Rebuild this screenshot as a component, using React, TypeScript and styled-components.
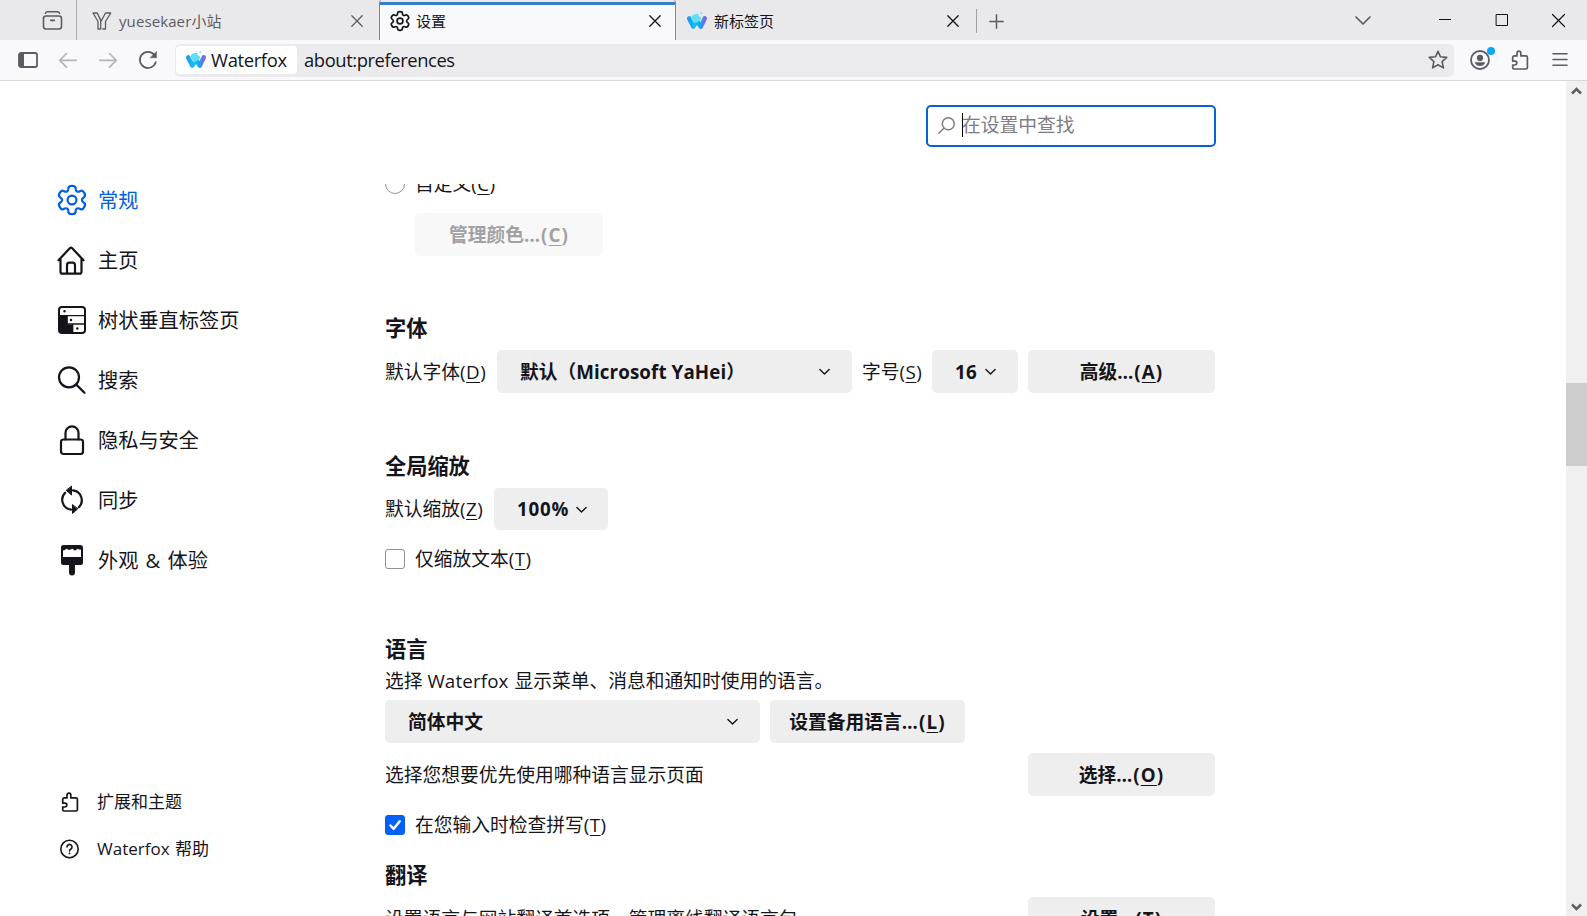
import React from "react";
import styled, { createGlobalStyle } from "styled-components";

const latin = `"Open Sans", "Noto Sans CJK SC", sans-serif`;

const GlobalStyle = createGlobalStyle`
  * { box-sizing: border-box; }
  html, body { margin: 0; height: 100%; overflow: hidden; }
  body { background: #fff; color: #15141a; font-family: ${latin}; }
  button { border: 0; padding: 0; font: inherit; color: inherit; }
  svg { display: block; flex: none; overflow: visible; }
`;

const Window = styled.div`
  width: 1587px;
  height: 916px;
  display: flex;
  flex-direction: column;
  overflow: hidden;
  background: #fff;
`;

/* ---------- tab strip ---------- */
const TabStrip = styled.div`
  height: 40px;
  flex: none;
  display: flex;
  background: #e9e9eb;
  color: #5b5b66;
`;
const TabsOverview = styled.div`
  width: 77px;
  padding-left: 42px;
  display: flex;
  align-items: center;
  border-right: 1px solid #a9a9af;
`;
const Tab = styled.div<{ $w: number; $active?: boolean; $muted?: boolean; $pad: number; $end?: number; $gap: number }>`
  width: ${(p) => p.$w}px;
  padding: 2px ${(p) => p.$end ?? 14}px 0 ${(p) => p.$pad}px;
  display: flex;
  align-items: center;
  gap: ${(p) => p.$gap}px;
  font-size: 15px;
  color: ${(p) => (p.$muted ? "#5c5c62" : "#15141a")};
  ${(p) =>
    p.$active &&
    `background: linear-gradient(#e9e9eb 2px, #3580c4 2px, #3580c4 5px, #f9f9fb 5px);
     border-left: 1px solid #85858f; border-right: 1px solid #85858f;
     border-radius: 3px 3px 0 0;`}
`;
const TabTitle = styled.span<{ $ls?: number }>`
  flex: 1;
  line-height: 20px;
  white-space: nowrap;
  letter-spacing: ${(p) => p.$ls ?? 0}px;
`;
const NewTab = styled.div`
  height: 24px;
  margin-top: 9px;
  padding-left: 12px;
  display: flex;
  align-items: center;
  border-left: 1px solid #a0a0a6;
`;
const WindowControls = styled.div`
  margin-left: auto;
  display: flex;
  align-items: center;
  padding-right: 22px;
  color: #111;
`;
const ControlSlot = styled.div<{ $mr: number }>`
  margin-right: ${(p) => p.$mr}px;
  color: ${(p) => (p.$mr > 60 ? "#5b5b66" : "inherit")};
`;

/* ---------- navigation bar ---------- */
const NavBar = styled.div`
  height: 41px;
  flex: none;
  display: flex;
  align-items: center;
  padding: 0 17px 1px 18px;
  background: #f9f9fb;
  border-bottom: 1px solid #d8d8db;
  color: #5b5b66;
`;
const NavButtons = styled.div`
  display: flex;
  align-items: center;
  gap: 20px;
  width: 157px;
`;
const Faded = styled.span`
  opacity: 0.42;
`;
const UrlBar = styled.div`
  width: 1279px;
  height: 33px;
  margin-top: 1px;
  display: flex;
  align-items: center;
  padding: 0 6px 0 1px;
  border-radius: 5px;
  background: #ebebed;
  font-size: 18.4px;
  color: #15141a;
`;
const Identity = styled.div`
  width: 121px;
  height: 28px;
  padding-left: 10px;
  display: flex;
  align-items: center;
  gap: 5px;
  border-radius: 4px;
  background: #fff;
  line-height: 26px;
`;
const Address = styled.div`
  flex: 1;
  padding-left: 7px;
  line-height: 26px;
`;
const Fit = styled.span<{ $ls: number; $ws?: number }>`
  letter-spacing: ${(p) => p.$ls}px;
  word-spacing: ${(p) => p.$ws ?? 0}px;
`;
const StarSlot = styled.span`
  color: #5b5b66;
`;
const NavTools = styled.div`
  margin-left: auto;
  display: flex;
  gap: 20px;
`;
const Account = styled.span`
  position: relative;
`;
const Dot = styled.i`
  position: absolute;
  right: -5px;
  top: -3px;
  width: 8px;
  height: 8px;
  border-radius: 50%;
  background: #08a9f5;
`;

/* ---------- preferences page ---------- */
const Page = styled.div`
  flex: 1;
  min-height: 0;
  display: flex;
`;
const Sidebar = styled.nav`
  width: 385px;
  padding: 89px 0 44px 57px;
  display: flex;
  flex-direction: column;
  justify-content: space-between;
`;
const Category = styled.div<{ $selected?: boolean }>`
  height: 60px;
  display: flex;
  align-items: center;
  gap: 11px;
  font-size: 20.2px;
  line-height: 30px;
  color: ${(p) => (p.$selected ? "#0061e0" : "#15141a")};
`;
const CategoryName = styled.span`
  word-spacing: 2px;
`;
const FooterLink = styled.div`
  height: 47px;
  display: flex;
  align-items: center;
  gap: 17px;
  padding-left: 3px;
  font-size: 17px;
  line-height: 26px;
`;
const Main = styled.main`
  width: 831px;
  display: flex;
  flex-direction: column;
`;
const SearchRow = styled.div`
  height: 103px;
  flex: none;
  padding-top: 24px;
  display: flex;
  justify-content: flex-end;
`;
const SearchBox = styled.div`
  width: 290px;
  height: 42px;
  padding: 0 0 2px 10px;
  display: flex;
  align-items: center;
  border: 2px solid #0a60d6;
  border-radius: 5px;
  font-size: 18.75px;
  line-height: 26px;
  color: #7d7d84;
`;
const Caret = styled.i`
  width: 1px;
  height: 24px;
  margin: 0 -1px 0 7px;
  background: #000;
`;
const Pane = styled.div`
  flex: 1;
  min-height: 0;
  overflow: hidden;
  font-size: 18.75px;
`;
const Row = styled.div<{ $mt: number; $h?: number; $indent?: number }>`
  width: 830px;
  height: ${(p) => p.$h ?? 43}px;
  margin-top: ${(p) => p.$mt}px;
  padding-left: ${(p) => p.$indent ?? 0}px;
  display: flex;
  align-items: center;
  gap: 10px;
  white-space: nowrap;
  line-height: 26px;
`;
const Heading = styled.h2<{ $mt: number }>`
  height: 30px;
  margin: ${(p) => p.$mt}px 0 0;
  font-size: 21.2px;
  font-weight: 700;
  line-height: 29px;
`;
const Label = styled.span<{ $w?: number }>`
  ${(p) => p.$w && `width: ${p.$w}px;`}
`;
const Button = styled.button<{ $w: number; $end?: boolean }>`
  width: ${(p) => p.$w}px;
  height: 100%;
  flex: none;
  ${(p) => p.$end && "margin-left: auto;"}
  border-radius: 5px;
  background: #eeeeee;
  font-weight: 700;
  line-height: 26px;
  &:disabled {
    background: #f8f8f8;
    color: #a1a1a3;
  }
`;
const Select = styled(Button)<{ $pr: number }>`
  display: flex;
  align-items: center;
  justify-content: space-between;
  padding: 0 ${(p) => p.$pr}px 0 23px;
`;
const Access = styled.span<{ $ls: number }>`
  letter-spacing: ${(p) => p.$ls}px;
`;
const Key = styled.span`
  text-decoration: underline;
  text-decoration-thickness: 1px;
  text-underline-offset: 3px;
`;
const Radio = styled.i`
  width: 20px;
  height: 20px;
  border: 1px solid #8f8f9d;
  border-radius: 50%;
`;
const Check = styled.i<{ $on?: boolean }>`
  width: 20px;
  height: 20px;
  border: 1px solid ${(p) => (p.$on ? "#0061e0" : "#8f8f9d")};
  border-radius: 3px;
  background: ${(p) => (p.$on ? "#0061fa" : "#fff")};
`;
const Scrollbar = styled.div`
  width: 21px;
  margin-left: auto;
  padding: 6px 0 5px;
  display: flex;
  flex-direction: column;
  align-items: center;
  background: #f0f0f0;
  color: #606060;
`;
const Thumb = styled.div`
  width: 21px;
  height: 83px;
  margin-top: 288px;
  margin-bottom: auto;
  background: #cdcdcd;
`;

/* ---------- icons ---------- */
type IconProps = { w: number; h?: number; box?: string; sw?: number; children: React.ReactNode };
const Icon = ({ w, h = w, box, sw = 1.6, children }: IconProps) => (
  <svg
    width={w}
    height={h}
    viewBox={box ?? `0 0 ${w} ${h}`}
    fill="none"
    stroke="currentColor"
    strokeWidth={sw}
    strokeLinecap="round"
    strokeLinejoin="round"
  >
    {children}
  </svg>
);

const gearPath = (() => {
  const pts: [number, number][] = [];
  for (let i = 0; i < 6; i++) {
    for (const [a, r] of [[-21, 10], [-14, 14.6], [14, 14.6], [21, 10]]) {
      const t = ((i * 60 + a - 90) * Math.PI) / 180;
      pts.push([15 + r * Math.cos(t), 15 + r * Math.sin(t)]);
    }
  }
  const mid = (a: [number, number], b: [number, number]) =>
    `${((a[0] + b[0]) / 2).toFixed(2)} ${((a[1] + b[1]) / 2).toFixed(2)}`;
  let d = `M${mid(pts[pts.length - 1], pts[0])}`;
  pts.forEach((p, i) => {
    d += `Q${p[0].toFixed(2)} ${p[1].toFixed(2)} ${mid(p, pts[(i + 1) % pts.length])}`;
  });
  return d + "Z";
})();

const Gear = ({ size, sw }: { size: number; sw: number }) => (
  <Icon w={size} box="0 0 30 30" sw={sw}>
    <path d={gearPath} />
    <circle cx="15" cy="15" r="4.4" />
  </Icon>
);
const Close = () => (
  <Icon w={12} sw={1.3}>
    <path d="M.8.8 11.2 11.2M11.2.8.8 11.2" />
  </Icon>
);
const Puzzle = () => (
  <Icon w={20} sw={1.7}>
    <path d="M2.7 10.200V7.500a1.600 1.600 0 0 1 1.600-1.600H7V3a1.900 1.900 0 0 1 3.800 0v2.900h5a1.600 1.600 0 0 1 1.600 1.600v9.900a1.600 1.600 0 0 1-1.600 1.600H4.100a1.400 1.400 0 0 1-1.400-1.400V15h2.200a1.900 1.900 0 0 0 0-3.900H2.700Z" />
  </Icon>
);
const Chevron = () => (
  <Icon w={11} h={7} sw={1.4}>
    <path d="m.9 1.500 4.600 4.600L10.100 1.500" />
  </Icon>
);
const WaterfoxLogo = () => (
  <svg width="20" height="20" viewBox="0 0 20 20">
    <defs>
      <linearGradient id="wf" x1="0" y1="0" x2="1" y2="0">
        <stop offset="0" stopColor="#1c9df0" />
        <stop offset=".35" stopColor="#10c4fb" />
        <stop offset=".7" stopColor="#1ba4f5" />
        <stop offset="1" stopColor="#7a6be0" />
      </linearGradient>
    </defs>
    <path
      d="M2.200 7.400 6.300 15.600 10 10l3.900 5.600L17.800 7.300"
      fill="none"
      stroke="url(#wf)"
      strokeWidth="4.500"
      strokeLinecap="round"
      strokeLinejoin="round"
    />
    <path d="M4.500 6.500C5.500 3.300 9 2.600 12 3.400c-1 .8-1 1.700.5 2.100 1.800.5 2.300 2.500.5 4L10 11.500 7.500 12Z" fill="#5fdcf6" />
    <circle cx="14.300" cy="2" r="1" fill="#7fe0f5" />
    <circle cx="10.200" cy="1.600" r=".7" fill="#9be8f7" />
    <circle cx="7" cy="3" r=".6" fill="#9be8f7" />
  </svg>
);

const K = ({ k, more }: { k: string; more?: boolean }) => (
  <Access $ls={more ? 1.1 : 0.5}>
    {more && "…"}(<Key>{k}</Key>)
  </Access>
);

export default function App() {
  return (
    <Window>
      <GlobalStyle />
      <TabStrip>
        <TabsOverview>
          <Icon w={21} sw={1.6}>
            <rect x="1.5" y="6" width="18" height="13" rx="2.5" />
            <path d="M3.500 3.200Q4 1.800 5.500 1.800h10q1.500 0 2 1.400M8.700 10.400h3.600" />
          </Icon>
        </TabsOverview>
        <Tab $w={302} $pad={15} $end={16} $gap={7} $muted>
          <Icon w={20} sw={1.3}>
            <path d="M1 2h4.200l4 8M1 2l5 8.500V18h2.700V9.500L5.200 2M9.200 10 13.500 2h5.300l-5.300 8.500V18h-2.700" />
          </Icon>
          <TabTitle $ls={0.1}>yuesekaer小站</TabTitle>
          <Close />
        </Tab>
        <Tab $w={297} $pad={10} $gap={6} $active>
          <Gear size={20} sw={2.5} />
          <TabTitle>设置</TabTitle>
          <Close />
        </Tab>
        <Tab $w={300} $pad={11} $end={17} $gap={7}>
          <WaterfoxLogo />
          <TabTitle>新标签页</TabTitle>
          <Close />
        </Tab>
        <NewTab>
          <Icon w={15} sw={1.5}>
            <path d="M7.500.800v13.400M.800 7.500h13.400" />
          </Icon>
        </NewTab>
        <WindowControls>
          <ControlSlot $mr={68}>
            <Icon w={16} h={9} sw={1.7}>
              <path d="m1 1 7 7 7-7" />
            </Icon>
          </ControlSlot>
          <ControlSlot $mr={45}>
            <Icon w={12} h={12} sw={1}>
              <path d="M0 5.500h12" strokeLinecap="butt" />
            </Icon>
          </ControlSlot>
          <ControlSlot $mr={44}>
            <Icon w={12} sw={1}>
              <path d="M.500.500h11v11H.500Z" strokeLinejoin="miter" />
            </Icon>
          </ControlSlot>
          <Icon w={13} sw={1.2}>
            <path d="M.500.500l12 12M12.500.500l-12 12" />
          </Icon>
        </WindowControls>
      </TabStrip>

      <NavBar>
        <NavButtons>
          <Icon w={20} sw={1.8}>
            <rect x="1" y="3" width="18" height="14" rx="2" />
            <path d="M1 3.500h5v13H1Z" fill="currentColor" stroke="none" />
          </Icon>
          <Faded>
            <Icon w={20} sw={1.7}>
              <path d="M18.200 10.300H1.700M8.500 3.500l-6.800 6.800 6.800 6.800" />
            </Icon>
          </Faded>
          <Faded>
            <Icon w={20} sw={1.7}>
              <path d="M1.800 10.300h16.500M11.500 3.500l6.800 6.800-6.800 6.800" />
            </Icon>
          </Faded>
          <Icon w={20} sw={1.7}>
            <path d="M17.800 12.100A8.100 8.100 0 1 1 16.200 4.700" />
            <path d="M18.500 1.600v6.200h-6.200Z" fill="currentColor" strokeWidth=".5" />
          </Icon>
        </NavButtons>
        <UrlBar>
          <Identity>
            <WaterfoxLogo />
            <Fit $ls={-0.35}>Waterfox</Fit>
          </Identity>
          <Address>
            <Fit $ls={-0.42}>about:preferences</Fit>
          </Address>
          <StarSlot>
            <Icon w={20} sw={1.6}>
              <path d="m10 1.300 2.500 5.500 6.200.600-4.600 4.200 1.300 6.300L10 14.800l-5.400 3.100 1.300-6.300L1.300 7.400l6.200-.600Z" />
            </Icon>
          </StarSlot>
        </UrlBar>
        <NavTools>
          <Account>
            <Icon w={20} sw={1.8}>
              <circle cx="10" cy="10" r="9" />
              <circle cx="10" cy="7.900" r="3.100" fill="currentColor" stroke="none" />
              <path d="M4.700 12.200h10.600c-.7 2.400-2.700 3.800-5.300 3.800s-4.600-1.400-5.300-3.800Z" fill="currentColor" stroke="none" />
            </Icon>
            <Dot />
          </Account>
          <Puzzle />
          <Icon w={20} sw={1.6}>
            <path d="M3 3.800h14M3 9.500h14M3 15.200h14" />
          </Icon>
        </NavTools>
      </NavBar>

      <Page>
        <Sidebar>
          <div>
            <Category $selected>
              <Gear size={30} sw={2.2} />
              <CategoryName>常规</CategoryName>
            </Category>
            <Category>
              <Icon w={30} sw={2.2}>
                <path d="M1.500 15.200 12.800 3.300q1.200-1.200 2.400 0L26.500 15.200M3.500 13.700v13a2 2 0 0 0 2 2h17a2 2 0 0 0 2-2v-13M10 28.700V20.200A2.500 2.500 0 0 1 12.500 17.700h3a2.500 2.500 0 0 1 2.500 2.500V28.700" />
              </Icon>
              <CategoryName>主页</CategoryName>
            </Category>
            <Category>
              <Icon w={30} sw={2}>
                <rect x="2" y="2" width="26" height="26" rx="3" />
                <path d="M2 10h8.500v9.500H16V28H4a2 2 0 0 1-2-2Z" fill="currentColor" stroke="none" />
                <path d="M3 10.700h25M10 19h18M10 11v8M15.700 19v9" strokeWidth="1.3" />
                <path d="M7.500 6.300h.01M14 15h.01M20.300 23.500h.01" strokeWidth="2.5" />
              </Icon>
              <CategoryName>树状垂直标签页</CategoryName>
            </Category>
            <Category>
              <Icon w={30} sw={2.2}>
                <circle cx="12" cy="12.300" r="10" />
                <path d="m19.300 19.600 8.200 8.200" />
              </Icon>
              <CategoryName>搜索</CategoryName>
            </Category>
            <Category>
              <Icon w={30} sw={2.2}>
                <rect x="4" y="14.500" width="22" height="14.500" rx="2.500" />
                <path d="M8.500 14.500V7.800a6.500 6.500 0 0 1 13 0v6.700" />
              </Icon>
              <CategoryName>隐私与安全</CategoryName>
            </Category>
            <Category>
              <Icon w={30} sw={2.2}>
                <path d="M16 5.300A10 10 0 0 1 21.800 22.300M14 24.700A10 10 0 0 1 8.200 7.700" />
                <path d="M14.500 1.500v8.500L9.500 5.500ZM15.500 20v8.500l5-4.500Z" fill="currentColor" strokeWidth="1" />
              </Icon>
              <CategoryName>同步</CategoryName>
            </Category>
            <Category>
              <Icon w={30} sw={2}>
                <path d="M5 13V2.500A1.500 1.500 0 0 1 6.500 1h17A1.500 1.500 0 0 1 25 2.500V13" />
                <path d="M5 1h20v3l-2 .8-2.500-1-2.500 2-2.500-2-3.500 1.200-2.500-1.200L7 5.500 5 5Z" fill="currentColor" stroke="none" />
                <path d="M4 12h22v5.500a2.500 2.500 0 0 1-2.500 2.500h-5.500v7a2.500 3 0 0 1-6 0v-7h-5.500A2.500 2.500 0 0 1 4 17.500Z" fill="currentColor" stroke="none" />
              </Icon>
              <CategoryName>外观 &amp; 体验</CategoryName>
            </Category>
          </div>
          <div>
            <FooterLink>
              <Puzzle />
              扩展和主题
            </FooterLink>
            <FooterLink>
              <Icon w={20} sw={1.6}>
                <circle cx="9.500" cy="10" r="8.700" />
                <path d="M7 7.900a2.500 2.500 0 1 1 3.900 2.100c-.8.500-1.400.9-1.400 1.900" />
                <path d="M9.500 14.400h.01" strokeWidth="1.9" />
              </Icon>
              <Fit $ls={0} $ws={1}>Waterfox 帮助</Fit>
            </FooterLink>
          </div>
        </Sidebar>

        <Main>
          <SearchRow>
            <SearchBox>
              <Icon w={17} sw={1.5}>
                <circle cx="10.300" cy="6.700" r="6" />
                <path d="M5.800 11.200.800 16.200" />
              </Icon>
              <Caret />
              在设置中查找
            </SearchBox>
          </SearchRow>
          <Pane>
            <Row $mt={-10} $h={20}>
              <Radio />
              <Label>自定义<K k="C" /></Label>
            </Row>
            <Row $mt={19} $indent={30}>
              <Button $w={188} disabled>管理颜色<K k="C" more /></Button>
            </Row>

            <Heading $mt={57}>字体</Heading>
            <Row $mt={7}>
              <Label $w={102}>默认字体<K k="D" /></Label>
              <Select $w={355} $pr={22}>
                <span>默认（<Fit $ls={0.1}>Microsoft YaHei</Fit>）</span>
                <Chevron />
              </Select>
              <Label $w={60}>字号<K k="S" /></Label>
              <Select $w={86} $pr={22}>
                <Fit $ls={0.4}>16</Fit> <Chevron />
              </Select>
              <Button $w={187} $end>高级<K k="A" more /></Button>
            </Row>

            <Heading $mt={58}>全局缩放</Heading>
            <Row $mt={7} $h={42}>
              <Label $w={99}>默认缩放<K k="Z" /></Label>
              <Select $w={114} $pr={21}>
                <Fit $ls={0.8}>100%</Fit> <Chevron />
              </Select>
            </Row>
            <Row $mt={19} $h={20}>
              <Check />
              <Label>仅缩放文本<K k="T" /></Label>
            </Row>

            <Heading $mt={65}>语言</Heading>
            <Row $mt={4} $h={26}>
              <Label>
                选择 <Fit $ls={0.15}>Waterfox</Fit>
                <Fit $ls={0} $ws={1}> </Fit>显示菜单、消息和通知时使用的语言。
              </Label>
            </Row>
            <Row $mt={6}>
              <Select $w={375} $pr={22}>
                简体中文 <Chevron />
              </Select>
              <Button $w={195}>设置备用语言<K k="L" more /></Button>
            </Row>
            <Row $mt={10}>
              <Label>选择您想要优先使用哪种语言显示页面</Label>
              <Button $w={187} $end>选择<K k="O" more /></Button>
            </Row>
            <Row $mt={19} $h={20}>
              <Check $on>
                <Icon w={18} sw={2.5}>
                  <path d="m4.500 9.500 3.200 3.300 6-7.600" stroke="#fff" />
                </Icon>
              </Check>
              <Label>在您输入时检查拼写<K k="T" /></Label>
            </Row>

            <Heading $mt={25}>翻译</Heading>
            <Row $mt={7}>
              <Label>设置语言与网站翻译首选项、管理离线翻译语言包。</Label>
              <Button $w={187} $end>设置<K k="T" more /></Button>
            </Row>
          </Pane>
        </Main>

        <Scrollbar>
          <Icon w={11} h={8} sw={2.6}>
            <path d="M1 6.500 5.500 2 10 6.500" strokeLinecap="butt" strokeLinejoin="miter" />
          </Icon>
          <Thumb />
          <Icon w={11} h={8} sw={2.6}>
            <path d="M1 1.500 5.500 6 10 1.500" strokeLinecap="butt" strokeLinejoin="miter" />
          </Icon>
        </Scrollbar>
      </Page>
    </Window>
  );
}
